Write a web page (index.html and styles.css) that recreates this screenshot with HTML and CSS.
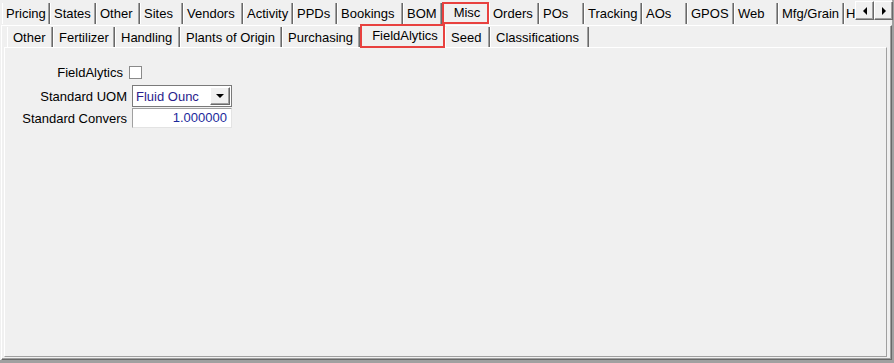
FILE: index.html
```html
<!DOCTYPE html>
<html>
  <head>
  <link rel="stylesheet" href="styles.css">
  </head>
  <body>
    <div class="window">
      <div class="tabrow main-tabs">
        <div class="tab">Pricing</div>
        <div class="tab">States</div>
        <div class="tab">Other</div>
        <div class="tab">Sites</div>
        <div class="tab">Vendors</div>
        <div class="tab">Activity</div>
        <div class="tab">PPDs</div>
        <div class="tab">Bookings</div>
        <div class="tab">BOM</div>
        <div class="tab selected">Misc</div>
        <div class="tab">Orders</div>
        <div class="tab">POs</div>
        <div class="tab">Tracking</div>
        <div class="tab">AOs</div>
        <div class="tab">GPOS</div>
        <div class="tab">Web</div>
        <div class="tab">Mfg/Grain</div>
        <div class="tab">H</div>
        <div class="scroller">
          <div class="scroll-btn"><span class="arrow arrow-left"></span></div>
          <div class="scroll-btn"><span class="arrow arrow-right"></span></div>
        </div>
      </div>

      <div class="panel outer">
        <div class="tabrow sub-tabs">
          <div class="tab">Other</div>
          <div class="tab">Fertilizer</div>
          <div class="tab">Handling</div>
          <div class="tab">Plants of Origin</div>
          <div class="tab">Purchasing</div>
          <div class="tab selected">FieldAlytics</div>
          <div class="tab">Seed</div>
          <div class="tab">Classifications</div>
        </div>

        <div class="panel inner">
          <div class="form">
            <div class="row row-check">
              <label class="label">FieldAlytics</label>
              <span class="checkbox"></span>
            </div>
            <div class="row row-select">
              <label class="label">Standard UOM</label>
              <div class="combo">
                <span class="combo-text">Fluid Ounc</span>
                <span class="combo-btn"><span class="arrow arrow-down"></span></span>
              </div>
            </div>
            <div class="row row-number">
              <label class="label">Standard Convers</label>
              <div class="number">1.000000</div>
            </div>
          </div>
        </div>
      </div>
    </div>
  </body>
</html>
```

FILE: styles.css
```css
html {
  background-color: #a0a0a0;
}
body {
  --face: #f0f0f0;
  --light: #ffffff;
  --shadow: #a0a0a0;
  --dark: #696969;
  --mark: #e8413f;

  margin: 0;
  font-family: "Liberation Sans", Arial, sans-serif;
  font-size: 13px;
  color: #000;
}

.window {
  width: 892px;
  height: 360px;
  background-color: var(--face);
}

/* tab strips */
.tabrow {
  display: flex;
  white-space: nowrap;
}
.tab {
  box-sizing: border-box;
  flex: none;
  overflow: hidden;
  border-left: 1px solid var(--light);
  border-right: 1px solid var(--dark);
  box-shadow: inset -1px 0 0 var(--shadow);
}
.tab.selected {
  position: relative;
  z-index: 1;
  border: 2px solid var(--mark);
  box-shadow: none;
  text-align: center;
  padding: 0;
}

.main-tabs {
  height: 25px;
  padding-left: 2px;
}
.main-tabs .tab {
  margin-top: 3px;
  height: 21px;
  line-height: 21px;
  padding-left: 3px;
}
.main-tabs .tab.selected {
  margin-top: 2px;
  height: 22px;
  line-height: 17px;
}
.main-tabs .tab:nth-child(1) { width: 48px; }
.main-tabs .tab:nth-child(2) { width: 46px; }
.main-tabs .tab:nth-child(3) { width: 44px; }
.main-tabs .tab:nth-child(4) { width: 43px; }
.main-tabs .tab:nth-child(5) { width: 60px; }
.main-tabs .tab:nth-child(6) { width: 50px; }
.main-tabs .tab:nth-child(7) { width: 44px; }
.main-tabs .tab:nth-child(8) { width: 66px; }
.main-tabs .tab:nth-child(9) { width: 39px; }
.main-tabs .tab:nth-child(10) { width: 47px; }
.main-tabs .tab:nth-child(11) { width: 50px; }
.main-tabs .tab:nth-child(12) { width: 45px; }
.main-tabs .tab:nth-child(13) { width: 58px; }
.main-tabs .tab:nth-child(14) { width: 45px; }
.main-tabs .tab:nth-child(15) { width: 47px; }
.main-tabs .tab:nth-child(16) { width: 44px; }
.main-tabs .tab:nth-child(17) { width: 66px; }
.main-tabs .tab:nth-child(18) {
  width: 11px;
  padding-left: 1px;
  border-right: 0;
  box-shadow: none;
}

.scroller {
  flex: none;
  display: flex;
  margin-top: 1px;
}
.scroll-btn {
  box-sizing: border-box;
  flex: none;
  width: 19px;
  height: 19px;
  display: flex;
  align-items: center;
  justify-content: center;
  background-color: var(--face);
  border-left: 1px solid var(--light);
  border-top: 1px solid var(--light);
  border-right: 1px solid var(--dark);
  border-bottom: 1px solid var(--dark);
  box-shadow: inset -1px -1px 0 var(--shadow);
}

.arrow {
  width: 0;
  height: 0;
  border-style: solid;
  border-color: transparent;
}
.arrow-left {
  border-width: 4px 4px 4px 0;
  border-right-color: #000;
}
.arrow-right {
  border-width: 4px 0 4px 4px;
  border-left-color: #000;
}
.arrow-down {
  border-width: 4px 4px 0 4px;
  border-top-color: #000;
}

/* panels */
.panel {
  box-sizing: border-box;
  border-left: 1px solid var(--light);
  border-top: 1px solid var(--light);
}
.outer {
  margin-left: 1px;
  width: 891px;
  height: 335px;
  border-right: 1px solid var(--dark);
  border-bottom: 1px solid var(--dark);
  box-shadow: inset -1px -1px 0 var(--shadow);
}
.inner {
  margin-left: 2px;
  width: 883px;
  height: 310px;
  border-right: 1px solid var(--shadow);
  border-bottom: 1px solid var(--shadow);
}

.sub-tabs {
  height: 21px;
  padding-left: 5px;
}
.sub-tabs .tab {
  margin-top: 1px;
  height: 20px;
  line-height: 22px;
  padding-left: 5px;
}
.sub-tabs .tab.selected {
  margin-top: -2px;
  height: 24px;
  line-height: 20px;
}
.sub-tabs .tab:nth-child(1) { width: 46px; }
.sub-tabs .tab:nth-child(2) { width: 62px; }
.sub-tabs .tab:nth-child(3) { width: 65px; }
.sub-tabs .tab:nth-child(4) { width: 102px; }
.sub-tabs .tab:nth-child(5) { width: 78px; }
.sub-tabs .tab:nth-child(6) { width: 85px; }
.sub-tabs .tab:nth-child(7) { width: 45px; }
.sub-tabs .tab:nth-child(8) { width: 99px; }

/* form */
.form {
  padding-top: 14px;
  display: flex;
  flex-direction: column;
}
.row {
  display: flex;
  align-items: center;
  gap: 5px;
}
.label {
  width: 122px;
  text-align: right;
}
.row-check {
  height: 20px;
}
.row-check .label {
  width: 118px;
  padding-right: 4px;
}
.checkbox {
  box-sizing: border-box;
  margin-left: -3px;
  width: 13px;
  height: 13px;
  background-color: #fff;
  border: 1px solid #8a8a8a;
}

.row-select {
  margin-top: 3px;
}
.combo {
  box-sizing: border-box;
  width: 100px;
  height: 22px;
  display: flex;
  align-items: center;
  justify-content: space-between;
  background-color: #fff;
  border: 1px solid #7a7a7a;
  padding: 0 1px 0 3px;
}
.combo-text {
  color: #2a1d8c;
}
.combo-btn {
  box-sizing: border-box;
  width: 20px;
  height: 18px;
  display: flex;
  align-items: center;
  justify-content: center;
  background-color: var(--face);
  border-left: 1px solid var(--light);
  border-top: 1px solid var(--light);
  border-right: 1px solid var(--dark);
  border-bottom: 1px solid var(--dark);
  box-shadow: inset -1px -1px 0 var(--shadow);
}

.row-number {
  margin-top: 1px;
}
.number {
  box-sizing: border-box;
  width: 100px;
  height: 20px;
  line-height: 18px;
  text-align: right;
  padding-right: 4px;
  color: #1c2a9c;
  background-color: #fff;
  border-left: 1px solid var(--shadow);
  border-top: 1px solid var(--shadow);
  border-right: 1px solid #e3e3e3;
  border-bottom: 1px solid #e3e3e3;
}
```
